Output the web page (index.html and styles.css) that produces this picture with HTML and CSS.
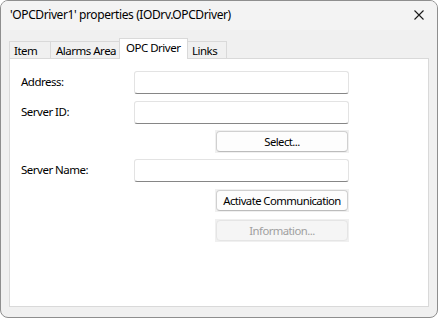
FILE: index.html
```html
<!DOCTYPE html>
<html>
<head>
<meta charset="utf-8">
<link rel="stylesheet" href="styles.css">
</head>
<body>
<div class="window">
  <div class="titlebar">
    <span class="title">'OPCDriver1' properties (IODrv.OPCDriver)</span>
    <span class="close">
      <svg width="10" height="10" viewBox="0 0 10 10"><path d="M0.5 0.5 L9.5 9.5 M9.5 0.5 L0.5 9.5" stroke="#1a1a1a" stroke-width="1.1" fill="none"/></svg>
    </span>
  </div>
  <div class="client">
    <div class="tabs">
      <div class="tab t-item">Item</div>
      <div class="tab t-alarms">Alarms Area</div>
      <div class="tab t-opc active">OPC Driver</div>
      <div class="tab t-links">Links</div>
    </div>
    <div class="panel">
      <div class="form">
        <div class="label">Address:</div>
        <div class="textbox"></div>
        <div class="label">Server ID:</div>
        <div class="textbox"></div>
        <div></div>
        <div class="btnwrap"><div class="btn">Select...</div></div>
        <div class="label">Server Name:</div>
        <div class="textbox"></div>
        <div></div>
        <div class="btnwrap"><div class="btn">Activate Communication</div></div>
        <div></div>
        <div class="btnwrap"><div class="btn disabled">Information...</div></div>
      </div>
    </div>
  </div>
</div>
</body>
</html>
```

FILE: styles.css
```css
html, body {
  margin: 0;
  padding: 0;
  background: #ffffff;
}
body {
  font-family: "Noto Sans", "Open Sans", sans-serif;
  font-size: 12px;
  color: #000;
  white-space: nowrap;
}
.window {
  box-sizing: border-box;
  width: 438px;
  height: 318px;
  border: 1px solid #8e8e8e;
  border-radius: 8px;
  overflow: hidden;
  background: #f0f0f0;
  display: flex;
  flex-direction: column;
}
.titlebar {
  height: 29px;
  flex: none;
  background: #f3f3f3;
  display: flex;
  align-items: center;
  justify-content: space-between;
  padding-left: 9px;
  padding-right: 9px;
}
.title {
  font-size: 12px;
  line-height: 16px;
  margin-top: -2px;
  letter-spacing: -0.4px;
}
.close {
  width: 10px;
  height: 10px;
  display: flex;
  margin-right: 4px;
  margin-top: -2px;
}
.client {
  flex: 1;
  display: flex;
  flex-direction: column;
  padding: 8px 8px 10px 8px;
}
.tabs {
  height: 20px;
  display: flex;
  align-items: flex-end;
  position: relative;
  z-index: 1;
}
.tab {
  box-sizing: border-box;
  height: 17px;
  border: 1px solid #d9d9d9;
  border-bottom: none;
  margin-right: -1px;
  text-align: left;
  line-height: 17px;
  background: #f0f0f0;
  font-size: 11.5px;
  letter-spacing: -0.5px;
  overflow: hidden;
}
.t-item { width: 42px; padding-left: 4px; }
.t-alarms { width: 70px; padding-left: 5px; }
.t-opc { width: 69px; padding-left: 6px; }
.t-links { width: 40px; padding-left: 4px; line-height: 18px; }
.tab.active {
  height: 21px;
  margin-bottom: -1px;
  background: #ffffff;
  line-height: 17px;
  position: relative;
  z-index: 2;
}
.panel {
  box-sizing: border-box;
  height: 249px;
  border: 1px solid #d9d9d9;
  background: #ffffff;
  padding: 12px 0 0 11px;
}
.form {
  display: grid;
  grid-template-columns: 113px 215px;
  grid-template-rows: 30px 29px 29px 30px 30px 22px;
  align-items: start;
}
.label {
  height: 23px;
  line-height: 22px;
  font-size: 11.5px;
  letter-spacing: -0.5px;
}
.textbox {
  box-sizing: border-box;
  height: 23px;
  background: #fff;
  border: 1px solid #e3e3e3;
  border-bottom: 1px solid #868686;
  border-radius: 3px;
}
.btnwrap {
  justify-self: end;
  box-sizing: border-box;
  width: 134px;
  height: 23px;
  background: #f0f0f0;
  padding: 1px;
}
.btn {
  box-sizing: border-box;
  height: 100%;
  background: #fdfdfd;
  border: 1px solid #d0d0d0;
  border-bottom-color: #bcbcbc;
  border-radius: 4px;
  text-align: center;
  line-height: 19px;
  font-size: 11.3px;
  letter-spacing: -0.55px;
}
.btn.disabled {
  background: #f5f5f5;
  border-color: #e5e5e5;
  color: #a0a0a0;
}
```
